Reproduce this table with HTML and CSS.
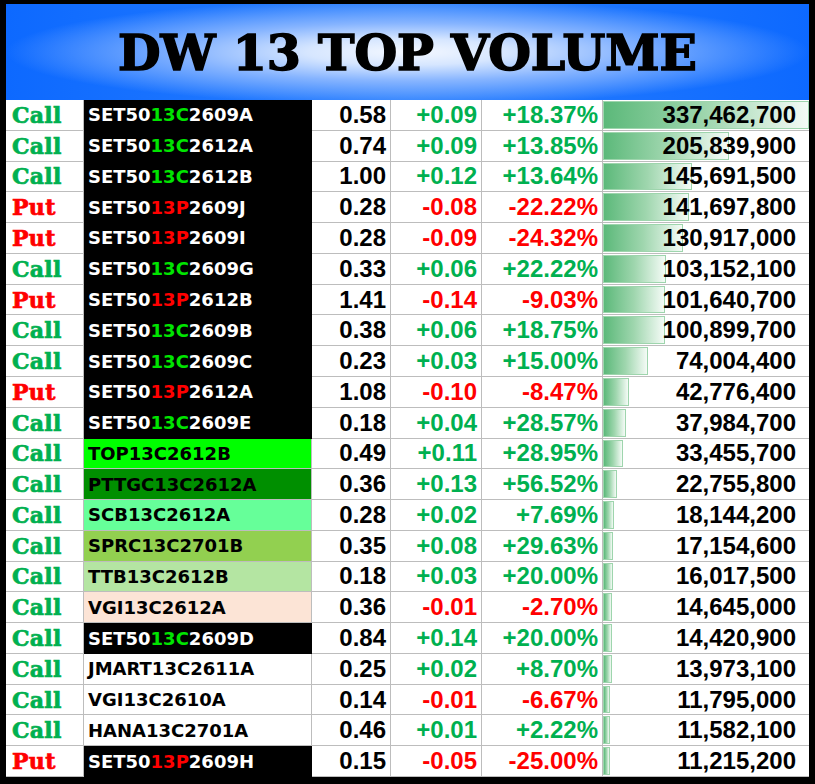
FILE: index.html
```html
<!DOCTYPE html>
<html>
<head>
<meta charset="utf-8">
<link rel="stylesheet" href="styles.css">
</head>
<body>
<div class="frame">
  <header class="banner"><h1 class="title">DW 13 TOP VOLUME</h1></header>
  <div class="table">
    <div class="c type call">Call</div><div class="c name blk">SET50<span class="g">13C</span>2609A</div><div class="c num">0.58</div><div class="c num up">+0.09</div><div class="c num up">+18.37%</div><div class="c vol"><div class="bar" style="width:100%"></div><span>337,462,700</span></div>
    <div class="c type call">Call</div><div class="c name blk">SET50<span class="g">13C</span>2612A</div><div class="c num">0.74</div><div class="c num up">+0.09</div><div class="c num up">+13.85%</div><div class="c vol"><div class="bar" style="width:61%"></div><span>205,839,900</span></div>
    <div class="c type call">Call</div><div class="c name blk">SET50<span class="g">13C</span>2612B</div><div class="c num">1.00</div><div class="c num up">+0.12</div><div class="c num up">+13.64%</div><div class="c vol"><div class="bar" style="width:43.17%"></div><span>145,691,500</span></div>
    <div class="c type put">Put</div><div class="c name blk">SET50<span class="r">13P</span>2609J</div><div class="c num">0.28</div><div class="c num dn">-0.08</div><div class="c num dn">-22.22%</div><div class="c vol"><div class="bar" style="width:41.99%"></div><span>141,697,800</span></div>
    <div class="c type put">Put</div><div class="c name blk">SET50<span class="r">13P</span>2609I</div><div class="c num">0.28</div><div class="c num dn">-0.09</div><div class="c num dn">-24.32%</div><div class="c vol"><div class="bar" style="width:38.79%"></div><span>130,917,000</span></div>
    <div class="c type call">Call</div><div class="c name blk">SET50<span class="g">13C</span>2609G</div><div class="c num">0.33</div><div class="c num up">+0.06</div><div class="c num up">+22.22%</div><div class="c vol"><div class="bar" style="width:30.57%"></div><span>103,152,100</span></div>
    <div class="c type put">Put</div><div class="c name blk">SET50<span class="r">13P</span>2612B</div><div class="c num">1.41</div><div class="c num dn">-0.14</div><div class="c num dn">-9.03%</div><div class="c vol"><div class="bar" style="width:30.12%"></div><span>101,640,700</span></div>
    <div class="c type call">Call</div><div class="c name blk">SET50<span class="g">13C</span>2609B</div><div class="c num">0.38</div><div class="c num up">+0.06</div><div class="c num up">+18.75%</div><div class="c vol"><div class="bar" style="width:29.9%"></div><span>100,899,700</span></div>
    <div class="c type call">Call</div><div class="c name blk">SET50<span class="g">13C</span>2609C</div><div class="c num">0.23</div><div class="c num up">+0.03</div><div class="c num up">+15.00%</div><div class="c vol"><div class="bar" style="width:21.93%"></div><span>74,004,400</span></div>
    <div class="c type put">Put</div><div class="c name blk">SET50<span class="r">13P</span>2612A</div><div class="c num">1.08</div><div class="c num dn">-0.10</div><div class="c num dn">-8.47%</div><div class="c vol"><div class="bar" style="width:12.68%"></div><span>42,776,400</span></div>
    <div class="c type call">Call</div><div class="c name blk">SET50<span class="g">13C</span>2609E</div><div class="c num">0.18</div><div class="c num up">+0.04</div><div class="c num up">+28.57%</div><div class="c vol"><div class="bar" style="width:11.26%"></div><span>37,984,700</span></div>
    <div class="c type call">Call</div><div class="c name f-top">TOP13C2612B</div><div class="c num">0.49</div><div class="c num up">+0.11</div><div class="c num up">+28.95%</div><div class="c vol"><div class="bar" style="width:9.91%"></div><span>33,455,700</span></div>
    <div class="c type call">Call</div><div class="c name f-pttgc">PTTGC13C2612A</div><div class="c num">0.36</div><div class="c num up">+0.13</div><div class="c num up">+56.52%</div><div class="c vol"><div class="bar" style="width:6.74%"></div><span>22,755,800</span></div>
    <div class="c type call">Call</div><div class="c name f-scb">SCB13C2612A</div><div class="c num">0.28</div><div class="c num up">+0.02</div><div class="c num up">+7.69%</div><div class="c vol"><div class="bar" style="width:5.38%"></div><span>18,144,200</span></div>
    <div class="c type call">Call</div><div class="c name f-sprc">SPRC13C2701B</div><div class="c num">0.35</div><div class="c num up">+0.08</div><div class="c num up">+29.63%</div><div class="c vol"><div class="bar" style="width:5.08%"></div><span>17,154,600</span></div>
    <div class="c type call">Call</div><div class="c name f-ttb">TTB13C2612B</div><div class="c num">0.18</div><div class="c num up">+0.03</div><div class="c num up">+20.00%</div><div class="c vol"><div class="bar" style="width:4.75%"></div><span>16,017,500</span></div>
    <div class="c type call">Call</div><div class="c name f-vgi">VGI13C2612A</div><div class="c num">0.36</div><div class="c num dn">-0.01</div><div class="c num dn">-2.70%</div><div class="c vol"><div class="bar" style="width:4.34%"></div><span>14,645,000</span></div>
    <div class="c type call">Call</div><div class="c name blk">SET50<span class="g">13C</span>2609D</div><div class="c num">0.84</div><div class="c num up">+0.14</div><div class="c num up">+20.00%</div><div class="c vol"><div class="bar" style="width:4.27%"></div><span>14,420,900</span></div>
    <div class="c type call">Call</div><div class="c name">JMART13C2611A</div><div class="c num">0.25</div><div class="c num up">+0.02</div><div class="c num up">+8.70%</div><div class="c vol"><div class="bar" style="width:4.14%"></div><span>13,973,100</span></div>
    <div class="c type call">Call</div><div class="c name">VGI13C2610A</div><div class="c num">0.14</div><div class="c num dn">-0.01</div><div class="c num dn">-6.67%</div><div class="c vol"><div class="bar" style="width:3.5%"></div><span>11,795,000</span></div>
    <div class="c type call">Call</div><div class="c name">HANA13C2701A</div><div class="c num">0.46</div><div class="c num up">+0.01</div><div class="c num up">+2.22%</div><div class="c vol"><div class="bar" style="width:3.43%"></div><span>11,582,100</span></div>
    <div class="c type put">Put</div><div class="c name blk">SET50<span class="r">13P</span>2609H</div><div class="c num">0.15</div><div class="c num dn">-0.05</div><div class="c num dn">-25.00%</div><div class="c vol"><div class="bar" style="width:3.32%"></div><span>11,215,200</span></div>
  </div>
</div>
</body>
</html>
```

FILE: styles.css
```css
html, body {
  margin: 0;
  padding: 0;
  background: #000;
}

.frame {
  width: 803px;
  height: 773px;
  margin: 4px 0 0 6px;
  display: flex;
  flex-direction: column;
  background: #fff;
}

.banner {
  height: 96px;
  flex: none;
  display: flex;
  align-items: center;
  justify-content: center;
  background:
    radial-gradient(ellipse 50% 55% at 50% 50%, #f4f8ff 0%, #d6e6ff 25%, #86b4ff 55%, rgba(40,125,255,0) 100%),
    linear-gradient(90deg, #0d69ff 0%, #2a80ff 50%, #0d69ff 100%);
}

.title {
  margin: 0;
  font-family: "DejaVu Serif", "Liberation Serif", serif;
  font-weight: 900;
  font-size: 49px;
  line-height: 1;
  color: #000;
  -webkit-text-stroke: 1.6px #000;
  padding-top: 2px;
}

.table {
  flex: 1;
  display: grid;
  grid-template-columns: 78px 228px 79px 91px 121px 206px;
  grid-template-rows: repeat(22, 1fr);
}

.c {
  box-sizing: border-box;
  border-right: 1px solid #bdbdbd;
  border-bottom: 1px solid #bdbdbd;
  display: flex;
  align-items: center;
  white-space: nowrap;
  overflow: hidden;
}

.type {
  padding-left: 6px;
  font-family: "DejaVu Serif", "Liberation Serif", serif;
  font-weight: 900;
  font-size: 22px;
  letter-spacing: 0.3px;
  -webkit-text-stroke: 0.7px currentColor;
}

.call { color: #00b050; }
.put { color: #ff0000; }

.name {
  padding-left: 4px;
  font-family: "DejaVu Sans", "Liberation Sans", sans-serif;
  font-weight: bold;
  font-size: 18px;
  color: #000;
}

.blk {
  background: #000;
  color: #fff;
  border-color: #000;
}

.g { color: #00e400; }
.r { color: #ff0000; }

.f-top { background: #00ff00; }
.f-pttgc { background: #008f00; }
.f-scb { background: #66ff99; }
.f-sprc { background: #92d050; }
.f-ttb { background: #b4e5a2; }
.f-vgi { background: #fce4d6; }

.num {
  justify-content: flex-end;
  padding-right: 4px;
  font-family: "Liberation Sans", Arial, sans-serif;
  font-weight: bold;
  font-size: 24px;
  color: #000;
}

.up { color: #00b050; }
.dn { color: #ff0000; }

.vol {
  position: relative;
  justify-content: flex-end;
  padding-right: 13px;
  font-family: "Liberation Sans", Arial, sans-serif;
  font-weight: bold;
  font-size: 24px;
  color: #000;
  border-right: none;
}

.vol span {
  position: relative;
}

.bar {
  position: absolute;
  left: 0;
  top: 1px;
  bottom: 1px;
  box-sizing: border-box;
  border: 1px solid #9ed5ad;
  background: linear-gradient(90deg, #5cb97a 0%, #9fd6ae 50%, #f4fbf6 100%);
}
```
